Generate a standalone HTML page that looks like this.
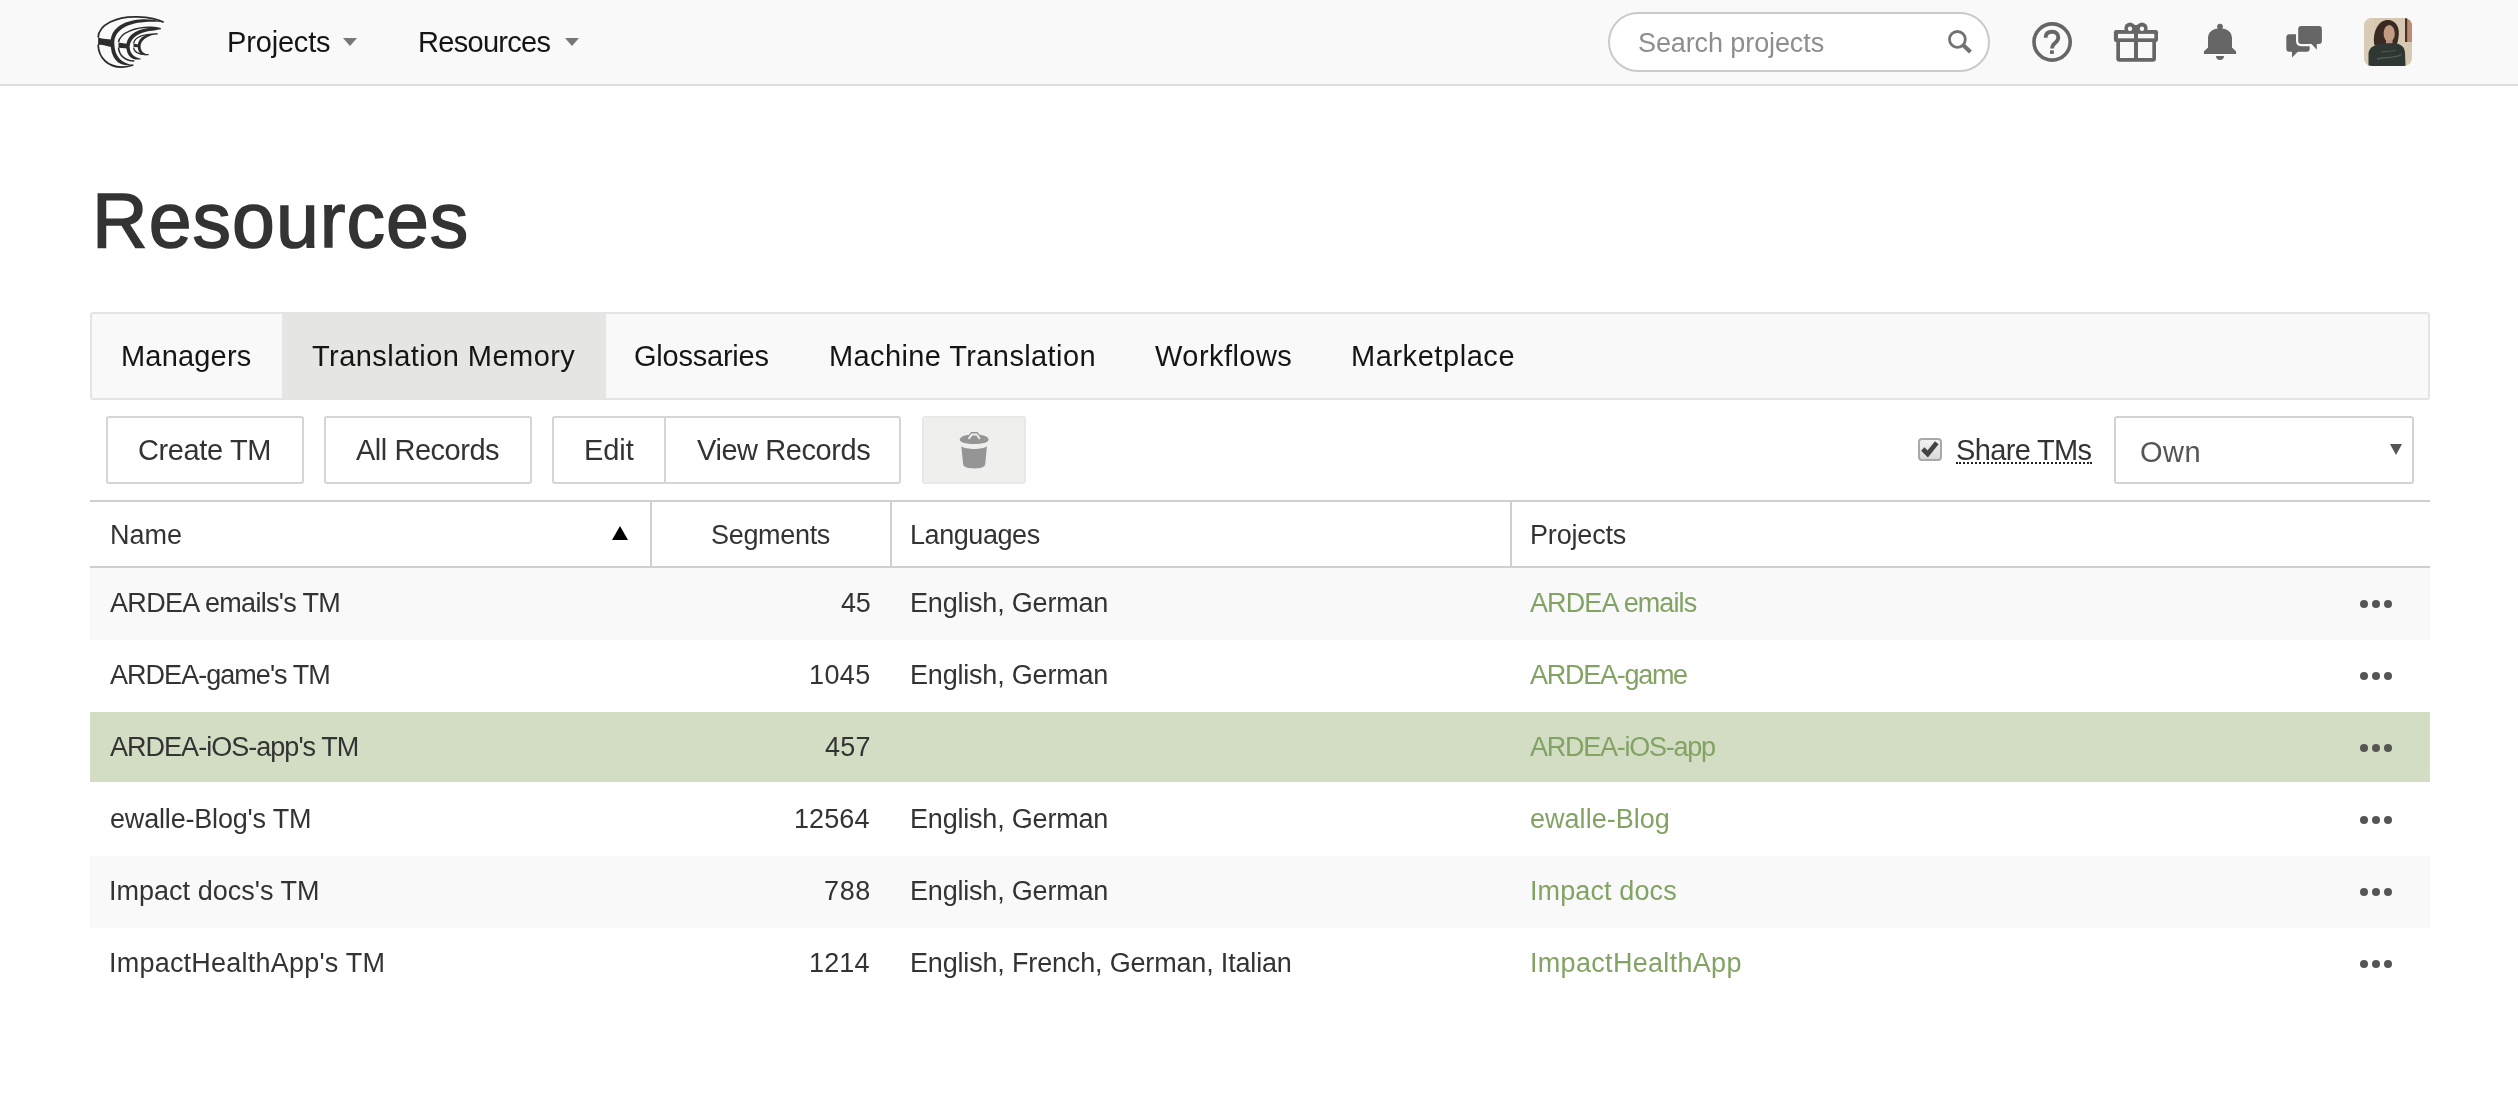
<!DOCTYPE html>
<html><head><meta charset="utf-8"><title>Resources</title>
<style>
html,body{margin:0;padding:0;}
body{width:2518px;height:1105px;position:relative;overflow:hidden;background:#fff;font-family:"Liberation Sans",sans-serif;color:#333;}
.a{position:absolute;}
.t{position:absolute;white-space:nowrap;line-height:1;will-change:transform;}
#hdr{left:0;top:0;width:2518px;height:84px;background:#f9f9f9;border-bottom:2px solid #dfdfdf;}
.nav{font-size:29px;color:#151515;}
.caret{width:0;height:0;border-left:7.5px solid transparent;border-right:7.5px solid transparent;border-top:8px solid #777;}
#search{left:1608px;top:12px;width:378px;height:56px;border:2px solid #cacaca;border-radius:30px;background:#fff;}
.tab{font-size:29px;color:#151515;top:342px;}
.btn{position:absolute;top:416px;height:64px;border:2px solid #d5d5d5;border-radius:3px;background:#fff;}
.bt{font-size:29px;color:#333;top:436px;}
.hd{font-size:28px;color:#333;top:521px;}
.row{position:absolute;left:90px;width:2340px;height:72px;}
.rt{font-size:27px;color:#333;}
.lk{font-size:27px;color:#7a9c5a;}
.num{text-align:right;}
.dots{position:absolute;left:2360px;width:32px;height:8px;}
.dots i{position:absolute;top:0;width:8px;height:8px;border-radius:50%;background:#555;}
.vline{position:absolute;top:502px;width:2px;height:64px;background:#cfcfcf;}
</style></head>
<body>
<!-- Header -->
<div id="hdr" class="a"></div>
<svg class="a" style="left:90px;top:10px" width="80" height="64" viewBox="0 0 1381 1105">
  <g fill="none" stroke="#2c2c2c" stroke-linecap="butt">
    <path d="M140 475 C150 250 460 105 820 118 C1030 126 1190 165 1272 212" stroke-width="30"/>
    
    <path d="M140 600 C150 830 310 990 560 985 C640 982 700 965 748 950" stroke-width="30"/>
    
    
    
    
    <path d="M492 555 C520 385 800 292 1060 300 C1130 303 1180 312 1222 322" stroke-width="26"/>
    
    <path d="M492 650 C502 780 600 880 765 880" stroke-width="26"/>
    
    <path d="M752 578 C772 470 900 410 1170 412" stroke-width="22"/>
    
    <path d="M752 650 C762 730 850 780 1012 770" stroke-width="22"/>
    
  </g>
  <g fill="#2c2c2c">
    <path d="M1272 212 C1150 172 1050 155 905 160 C640 172 355 280 357 560 C352 850 495 985 748 950 C545 918 420 810 419 560 C428 325 680 228 915 210 C1065 200 1165 205 1272 212 Z"/>
    <path d="M1222 322 C1160 305 1110 306 1055 308 C860 320 630 410 627 630 C632 815 750 885 892 845 C770 820 690 770 683 630 C700 455 890 375 1065 358 C1125 352 1175 340 1222 322 Z"/>
    <path d="M1168 412 C950 400 830 480 824 625 C828 760 910 800 1012 770 C930 755 876 720 872 625 C880 525 975 445 1168 412 Z"/>
    <path d="M140 470 L200 490 L400 515 L380 645 L200 600 L140 605 Z"/>
    <path d="M492 560 L660 585 L655 665 L492 650 Z"/>
    <path d="M752 580 L850 600 L848 645 L752 640 Z"/>
  </g>
</svg>

<div class="a caret" style="left:343px;top:38px"></div>
<div class="a caret" style="left:565px;top:38px"></div>

<div id="search" class="a"></div>


<!-- search icon -->
<svg class="a" style="left:1940px;top:22px" width="40" height="40" viewBox="1940 22 40 40">
  <circle cx="1957.4" cy="39.4" r="7.9" fill="none" stroke="#727272" stroke-width="2.8"/>
  <path d="M1962.5 44.5 L1970.5 52" stroke="#727272" stroke-width="4.2"/>
</svg>
<!-- help icon -->
<svg class="a" style="left:2028px;top:18px" width="48" height="48" viewBox="2028 18 48 48">
  <circle cx="2052.1" cy="42" r="18.1" fill="none" stroke="#666" stroke-width="3.6"/>
  <path d="M2045.6 37.8 C2045.6 33.3 2048.4 31.8 2052.2 31.8 C2056.2 31.8 2058.3 34.2 2058.3 37.6 C2058.3 41 2055.3 42.6 2053.6 44.4 C2052.4 45.6 2052 46.6 2052 48.6" fill="none" stroke="#666" stroke-width="3.9"/>
  <rect x="2050" y="50.4" width="3.9" height="3.5" fill="#666"/>
</svg>
<!-- gift icon -->
<svg class="a" style="left:2110px;top:18px" width="52" height="48" viewBox="2110 18 52 48">
  <g fill="#666">
    <circle cx="2130" cy="28.2" r="5.6"/>
    <circle cx="2142" cy="28.2" r="5.6"/>
    <rect x="2113.9" y="30.1" width="44.1" height="11.9" rx="2.2"/>
    <rect x="2116.3" y="40" width="39.7" height="21.7" rx="3"/>
    <rect x="2133" y="25" width="6" height="6"/>
  </g>
  <g fill="#f8f8f8">
    <circle cx="2130" cy="28.8" r="2.2"/>
    <circle cx="2142" cy="28.8" r="2.2"/>
    <rect x="2118" y="33.9" width="16" height="4.4"/>
    <rect x="2138" y="33.9" width="16.3" height="4.4"/>
    <rect x="2120" y="42" width="14" height="16"/>
    <rect x="2138" y="42" width="14.3" height="16"/>
  </g>
</svg>
<!-- bell icon -->
<svg class="a" style="left:2200px;top:18px" width="40" height="46" viewBox="2200 18 40 46">
  <g fill="#666">
    <circle cx="2220" cy="26.6" r="2.9"/>
    <path d="M2203.9 51.6 L2208 47.6 L2208 38.5 C2208 32 2213 28.3 2220 28.3 C2227 28.3 2232 32 2232 38.5 L2232 47.6 L2236.1 51.6 L2236.1 53.9 L2203.9 53.9 Z"/>
    <path d="M2216 55.9 L2224 55.9 C2224 58.3 2222.3 60 2220 60 C2217.7 60 2216 58.3 2216 55.9 Z"/>
  </g>
</svg>
<!-- chat icon -->
<svg class="a" style="left:2280px;top:20px" width="48" height="42" viewBox="2280 20 48 42">
  <g fill="#666">
    <rect x="2286.3" y="34.2" width="23.4" height="17.6" rx="3"/>
    <path d="M2292 51 L2298.5 51 L2292 57.6 Z"/>
  </g>
  <path d="M2301.2 26 L2318.9 26 Q2321.9 26 2321.9 29 L2321.9 41 Q2321.9 44 2318.9 44 L2316.8 44 L2316.8 49.8 L2311.6 44 L2301.2 44 Q2298.2 44 2298.2 41 L2298.2 29 Q2298.2 26 2301.2 26 Z" fill="#f9f9f9" stroke="#f9f9f9" stroke-width="4.4" stroke-linejoin="round"/>
  <path d="M2301.2 26 L2318.9 26 Q2321.9 26 2321.9 29 L2321.9 41 Q2321.9 44 2318.9 44 L2316.8 44 L2316.8 49.8 L2311.6 44 L2301.2 44 Q2298.2 44 2298.2 41 L2298.2 29 Q2298.2 26 2301.2 26 Z" fill="#666"/>
</svg>
<!-- avatar -->
<svg class="a" style="left:2364px;top:18px" width="48" height="48" viewBox="0 0 48 48">
  <defs><clipPath id="av"><rect x="0" y="0" width="48" height="48" rx="8"/></clipPath></defs>
  <g clip-path="url(#av)">
    <rect width="48" height="48" fill="#d6c8b1"/>
    <rect x="0" y="0" width="10" height="48" fill="#d9ccb6"/>
    <rect x="41" y="0" width="7" height="24" fill="#bb8c72"/>
    <rect x="41" y="0" width="2.2" height="24" fill="#4b3226"/>
    <path d="M10.5 27 C8.5 18 12 3.5 22.5 2 C30.5 1 35.5 8 34.8 16 C34.4 22 33.5 26 31.5 27.5 L14 28.5 Z" fill="#3a2a21"/>
    <ellipse cx="25.2" cy="15.5" rx="5.6" ry="8.6" fill="#c29c82"/>
    <rect x="22" y="22" width="6.5" height="4" fill="#b99482"/>
    <path d="M4.5 48 L4.5 35 C5.5 28.5 12 25.8 20 25.2 L30 25.2 C37 25.8 40.5 28.5 41 35 L41.5 48 Z" fill="#2f3733"/>
    <path d="M13 41 C20 38.5 29 41 37.5 36.5" fill="none" stroke="#56605b" stroke-width="1.4"/>
    <path d="M17 34 C22 33 27 34 32 32" fill="none" stroke="#4a5450" stroke-width="1.2"/>
  </g>
</svg>

<!-- Page heading -->

<!-- Tabs -->
<div class="a" style="left:90px;top:312px;width:2336px;height:84px;border:2px solid #e4e4e4;border-radius:3px;background:#f9f9f9"></div>
<div class="a" style="left:282px;top:314px;width:324px;height:86px;background:#e5e5e3"></div>

<!-- Buttons -->
<div class="btn" style="left:106px;width:194px"></div>
<div class="btn" style="left:324px;width:204px"></div>
<div class="btn" style="left:552px;width:345px"></div>
<div class="a" style="left:664px;top:418px;width:2px;height:64px;background:#d5d5d5"></div>
<div class="btn" style="left:922px;width:100px;background:#efefee;border-color:#e8e8e8"></div>


<!-- trash icon -->
<svg class="a" style="left:950px;top:426px" width="48" height="48" viewBox="950 426 48 48">
  <g fill="#959595">
    <path d="M967.6 437 L971 432 L977.6 432 L981 437 Z"/>
    <path d="M959.8 439.6 C959.8 436.5 966 434.6 974.2 434.6 C982.4 434.6 988.6 436.5 988.6 439.6 C988.6 442.6 982.4 444.1 974.2 444.1 C966 444.1 959.8 442.6 959.8 439.6 Z"/>
    <path d="M961.3 446.2 C966 449.8 982.4 449.8 987 446.2 L985.2 464.5 C984.6 467.3 980 468.4 974.2 468.4 C968.4 468.4 963.8 467.3 963.2 464.5 Z"/>
  </g>
  <path d="M968.6 438.8 L971.9 434.5 L976.6 434.5 L979.9 438.8" fill="none" stroke="#efefee" stroke-width="1.9"/>
</svg>
<!-- checkbox -->
<div class="a" style="left:1918px;top:438px;width:20px;height:19px;border:2px solid #a9a9a9;border-radius:4px;background:linear-gradient(#f2f2f2,#d9d9d9)"></div>
<svg class="a" style="left:1916px;top:436px" width="28" height="28" viewBox="1916 436 28 28">
  <path d="M1922.8 449 L1927.7 453.9 L1936.8 442.8" fill="none" stroke="#444" stroke-width="4.7"/>
</svg>
<div class="a" style="left:1956px;top:462px;width:136px;height:0;border-top:2.5px dotted #222"></div>
<!-- select -->
<div class="a" style="left:2114px;top:416px;width:296px;height:64px;border:2px solid #d2d2d2;border-radius:3px;background:#fff"></div>
<div class="a" style="left:2390px;top:444px;width:0;height:0;border-left:6px solid transparent;border-right:6px solid transparent;border-top:11px solid #555"></div>
<!-- sort arrow -->
<div class="a" style="left:612px;top:526px;width:0;height:0;border-left:8px solid transparent;border-right:8px solid transparent;border-bottom:14px solid #000"></div>

<!-- Table header -->
<div class="a" style="left:90px;top:500px;width:2340px;height:2px;background:#cfcfcf"></div>
<div class="a" style="left:90px;top:566px;width:2340px;height:2px;background:#cfcfcf"></div>
<div class="vline" style="left:650px"></div>
<div class="vline" style="left:890px"></div>
<div class="vline" style="left:1510px"></div>

<!-- Rows -->
<div class="row" style="top:568px;background:#f9f9f9"></div>
<div class="row" style="top:640px;background:#fff"></div>
<div class="row" style="top:712px;height:70px;background:#d2ddc4"></div>
<div class="row" style="top:784px;background:#fff"></div>
<div class="row" style="top:856px;background:#f9f9f9"></div>
<div class="row" style="top:928px;background:#fff"></div>

<div class="dots" style="top:600px"><i style="left:0"></i><i style="left:12px"></i><i style="left:24px"></i></div>
<div class="dots" style="top:672px"><i style="left:0"></i><i style="left:12px"></i><i style="left:24px"></i></div>
<div class="dots" style="top:744px"><i style="left:0"></i><i style="left:12px"></i><i style="left:24px"></i></div>
<div class="dots" style="top:816px"><i style="left:0"></i><i style="left:12px"></i><i style="left:24px"></i></div>
<div class="dots" style="top:888px"><i style="left:0"></i><i style="left:12px"></i><i style="left:24px"></i></div>
<div class="dots" style="top:960px"><i style="left:0"></i><i style="left:12px"></i><i style="left:24px"></i></div>
<div class="t" id="t0" style="left:226.60px;top:28px;font-size:29px;color:#151515;letter-spacing:-0.167px;">Projects</div>
<div class="t" id="t1" style="left:418.40px;top:28px;font-size:29px;color:#151515;letter-spacing:-0.697px;">Resources</div>
<div class="t" id="t2" style="left:1637.90px;top:30px;font-size:27px;color:#8e8e8e;letter-spacing:-0.103px;">Search projects</div>
<div class="t" id="t3" style="left:92.20px;top:182px;font-size:77px;color:#333;letter-spacing:1.036px;-webkit-text-stroke:1.5px #333;">Resources</div>
<div class="t" id="t4" style="left:121.00px;top:342px;font-size:29px;color:#151515;letter-spacing:0.180px;">Managers</div>
<div class="t" id="t5" style="left:312.00px;top:342px;font-size:29px;color:#151515;letter-spacing:0.450px;">Translation Memory</div>
<div class="t" id="t6" style="left:634.30px;top:342px;font-size:29px;color:#151515;letter-spacing:-0.230px;">Glossaries</div>
<div class="t" id="t7" style="left:828.70px;top:342px;font-size:29px;color:#151515;letter-spacing:0.390px;">Machine Translation</div>
<div class="t" id="t8" style="left:1155.00px;top:342px;font-size:29px;color:#151515;letter-spacing:0.450px;">Workflows</div>
<div class="t" id="t9" style="left:1351.00px;top:342px;font-size:29px;color:#151515;letter-spacing:0.558px;">Marketplace</div>
<div class="t" id="t10" style="left:138.30px;top:436px;font-size:29px;color:#333;letter-spacing:-0.371px;">Create TM</div>
<div class="t" id="t11" style="left:356.40px;top:436px;font-size:29px;color:#333;letter-spacing:-0.468px;">All Records</div>
<div class="t" id="t12" style="left:584.00px;top:436px;font-size:29px;color:#333;letter-spacing:-0.060px;">Edit</div>
<div class="t" id="t13" style="left:696.60px;top:436px;font-size:29px;color:#333;letter-spacing:-0.425px;">View Records</div>
<div class="t" id="t14" style="left:1955.70px;top:436px;font-size:29px;color:#333;letter-spacing:-0.657px;">Share TMs</div>
<div class="t" id="t15" style="left:2140.20px;top:438px;font-size:29px;color:#555;letter-spacing:0.450px;">Own</div>
<div class="t" id="t16" style="left:110.30px;top:522px;font-size:27px;color:#333;letter-spacing:0.030px;">Name</div>
<div class="t" id="t17" style="left:710.80px;top:522px;font-size:27px;color:#333;letter-spacing:-0.321px;">Segments</div>
<div class="t" id="t18" style="left:910.00px;top:522px;font-size:27px;color:#333;letter-spacing:-0.427px;">Languages</div>
<div class="t" id="t19" style="left:1530.30px;top:522px;font-size:27px;color:#333;letter-spacing:-0.167px;">Projects</div>
<div class="t" id="t20" style="left:110.00px;top:590px;font-size:27px;color:#333;letter-spacing:-0.686px;">ARDEA emails&#x27;s TM</div>
<div class="t" id="t21" style="left:840.60px;top:590px;font-size:27px;color:#333;letter-spacing:-0.360px;">45</div>
<div class="t" id="t22" style="left:909.70px;top:590px;font-size:27px;color:#333;letter-spacing:-0.199px;">English, German</div>
<div class="t" id="t23" style="left:1529.80px;top:590px;font-size:27px;color:#82a364;letter-spacing:-0.900px;">ARDEA emails</div>
<div class="t" id="t24" style="left:110.20px;top:662px;font-size:27px;color:#333;letter-spacing:-0.964px;">ARDEA-game&#x27;s TM</div>
<div class="t" id="t25" style="left:809.00px;top:662px;font-size:27px;color:#333;letter-spacing:0.420px;">1045</div>
<div class="t" id="t26" style="left:909.70px;top:662px;font-size:27px;color:#333;letter-spacing:-0.199px;">English, German</div>
<div class="t" id="t27" style="left:1530.10px;top:662px;font-size:27px;color:#82a364;letter-spacing:-1.270px;">ARDEA-game</div>
<div class="t" id="t28" style="left:110.20px;top:734px;font-size:27px;color:#333;letter-spacing:-0.974px;">ARDEA-iOS-app&#x27;s TM</div>
<div class="t" id="t29" style="left:825.00px;top:734px;font-size:27px;color:#333;letter-spacing:0.180px;">457</div>
<div class="t" id="t30" style="left:1530.10px;top:734px;font-size:27px;color:#82a364;letter-spacing:-1.252px;">ARDEA-iOS-app</div>
<div class="t" id="t31" style="left:109.70px;top:806px;font-size:27px;color:#333;letter-spacing:-0.180px;">ewalle-Blog&#x27;s TM</div>
<div class="t" id="t32" style="left:794.00px;top:806px;font-size:27px;color:#333;letter-spacing:0.090px;">12564</div>
<div class="t" id="t33" style="left:909.70px;top:806px;font-size:27px;color:#333;letter-spacing:-0.199px;">English, German</div>
<div class="t" id="t34" style="left:1530.00px;top:806px;font-size:27px;color:#82a364;letter-spacing:0.027px;">ewalle-Blog</div>
<div class="t" id="t35" style="left:109.20px;top:878px;font-size:27px;color:#333;letter-spacing:0.018px;">Impact docs&#x27;s TM</div>
<div class="t" id="t36" style="left:824.00px;top:878px;font-size:27px;color:#333;letter-spacing:0.630px;">788</div>
<div class="t" id="t37" style="left:909.70px;top:878px;font-size:27px;color:#333;letter-spacing:-0.199px;">English, German</div>
<div class="t" id="t38" style="left:1529.60px;top:878px;font-size:27px;color:#82a364;letter-spacing:0.108px;">Impact docs</div>
<div class="t" id="t39" style="left:109.20px;top:950px;font-size:27px;color:#333;letter-spacing:0.218px;">ImpactHealthApp&#x27;s TM</div>
<div class="t" id="t40" style="left:809.00px;top:950px;font-size:27px;color:#333;letter-spacing:0.120px;">1214</div>
<div class="t" id="t41" style="left:909.70px;top:950px;font-size:27px;color:#333;letter-spacing:-0.171px;">English, French, German, Italian</div>
<div class="t" id="t42" style="left:1529.60px;top:950px;font-size:27px;color:#82a364;letter-spacing:0.309px;">ImpactHealthApp</div>
</body></html>
